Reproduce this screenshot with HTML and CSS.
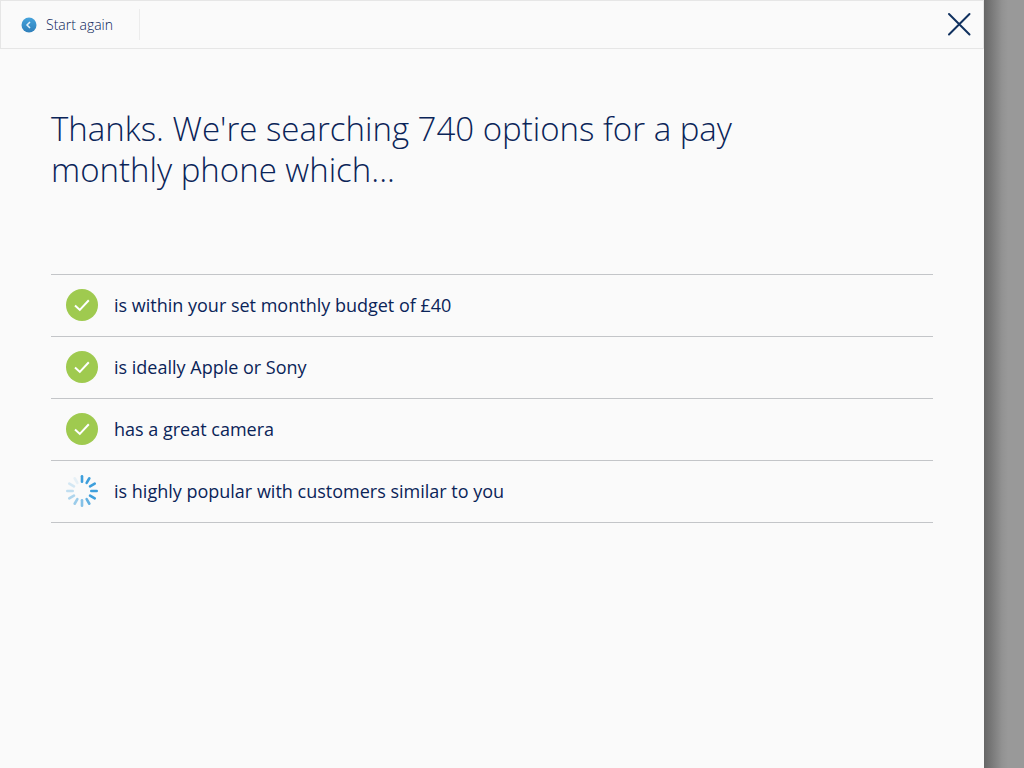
FILE: index.html
```html
<!DOCTYPE html>
<html lang="en">
<head>
    <meta charset="UTF-8">
    <meta name="viewport" content="width=device-width, initial-scale=1.0">
    <title>Searching for your phone</title>
    <link rel="stylesheet" href="styles.css">
</head>
<body>
    <div class="panel">
        <header class="topbar">
            <button type="button" class="back">
                <svg class="back-icon" viewBox="0 0 16 16">
                    <defs>
                        <linearGradient id="blue" x1="0" y1="0" x2="0" y2="1">
                            <stop offset="0" stop-color="#45a3dc"/>
                            <stop offset="1" stop-color="#2f7fba"/>
                        </linearGradient>
                    </defs>
                    <circle cx="8" cy="8" r="7.5" fill="url(#blue)"/>
                    <path d="M9 4.9 6 8l3 3.1" fill="none" stroke="#e4f1fa" stroke-width="1.5"/>
                </svg>
                Start again
            </button>
            <button type="button" class="close" aria-label="Close">
                <svg viewBox="0 0 24 24">
                    <path d="M2 2l20.5 20.5M22.5 2L2 22.5" fill="none" stroke="#10315f" stroke-width="2" stroke-linecap="round"/>
                </svg>
            </button>
        </header>
        <main class="content">
            <h1>Thanks. We're searching 740 options for a pay monthly phone which...</h1>
            <ul class="checks">
                <li>
                    <svg class="status" viewBox="0 0 32 32"><circle cx="16" cy="16" r="16"/><path d="M9 16.4l4.8 4.5 9-9.6"/></svg>
                    is within your set monthly budget of £40
                </li>
                <li>
                    <svg class="status" viewBox="0 0 32 32"><circle cx="16" cy="16" r="16"/><path d="M9 16.4l4.8 4.5 9-9.6"/></svg>
                    is ideally Apple or Sony
                </li>
                <li>
                    <svg class="status" viewBox="0 0 32 32"><circle cx="16" cy="16" r="16"/><path d="M9 16.4l4.8 4.5 9-9.6"/></svg>
                    has a great camera
                </li>
                <li>
                    <svg class="spinner" viewBox="0 0 32 32">
                        <path d="M16 1.3v5.4"/>
                        <path d="M16 1.3v5.4" transform="rotate(30 16 16)"/>
                        <path d="M16 1.3v5.4" transform="rotate(60 16 16)"/>
                        <path d="M16 1.3v5.4" transform="rotate(90 16 16)"/>
                        <path d="M16 1.3v5.4" transform="rotate(120 16 16)"/>
                        <path d="M16 1.3v5.4" transform="rotate(150 16 16)" opacity=".8"/>
                        <path d="M16 1.3v5.4" transform="rotate(180 16 16)" opacity=".62"/>
                        <path d="M16 1.3v5.4" transform="rotate(210 16 16)" opacity=".5"/>
                        <path d="M16 1.3v5.4" transform="rotate(240 16 16)" opacity=".4"/>
                        <path d="M16 1.3v5.4" transform="rotate(270 16 16)" opacity=".3"/>
                        <path d="M16 1.3v5.4" transform="rotate(300 16 16)" opacity=".2"/>
                        <path d="M16 1.3v5.4" transform="rotate(330 16 16)" opacity=".1"/>
                    </svg>
                    is highly popular with customers similar to you
                </li>
            </ul>
        </main>
    </div>
</body>
</html>
```
FILE: styles.css
```css
*{
    box-sizing: border-box;
}
body{
    margin: 0;
    background: linear-gradient(to left, #999 16px, #929292 22px, #666 40px);
    color: #0a2458;
    font-family: "Open Sans", "Noto Sans", sans-serif;
}
.panel{
    min-height: 100vh;
    margin-right: 40px;
    background: #fafafa;
}
.topbar{
    display: flex;
    justify-content: space-between;
    align-items: center;
    height: 49px;
    border: 1px solid #e6e6e6;
}
button{
    padding: 0;
    border: 0;
    background: none;
    color: inherit;
    font-family: inherit;
    cursor: pointer;
}
.back{
    display: flex;
    align-items: center;
    gap: 9px;
    height: 31px;
    padding: 0 26px 0 20px;
    border-right: 1px solid #ececec;
    font-size: 14px;
    font-weight: 300;
}
.back-icon{
    width: 16px;
    height: 16px;
}
.close{
    display: flex;
    padding: 0 12px 2px;
}
.close svg{
    width: 24px;
    height: 24px;
}
.content{
    padding: 59px 51px;
}
h1{
    max-width: 740px;
    margin: 0 0 84px;
    font-size: 33px;
    font-weight: 300;
    line-height: 41px;
}
.checks{
    margin: 0;
    padding: 0;
    list-style: none;
    border-top: 1px solid #c3c5c8;
}
.checks li{
    display: flex;
    align-items: center;
    gap: 16px;
    height: 62px;
    padding: 0 15px 2px;
    border-bottom: 1px solid #c3c5c8;
    font-size: 18px;
}
.status,.spinner{
    width: 32px;
    height: 32px;
}
.status circle{
    fill: #9fca4f;
}
.status path{
    fill: none;
    stroke: #fff;
    stroke-width: 2;
}
.spinner path{
    stroke: #3e9fdc;
    stroke-width: 2.6;
    stroke-linecap: round;
}
```
